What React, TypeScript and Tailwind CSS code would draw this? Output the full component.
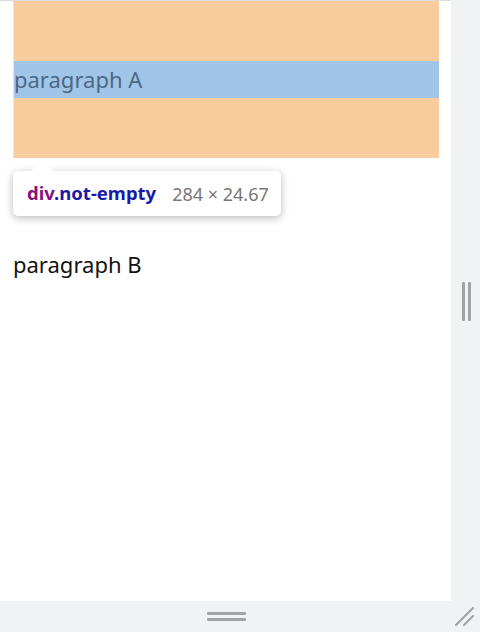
export default function App() {
  return (
    <div className="flex h-[632px] w-[480px] flex-col overflow-hidden bg-white font-['Noto_Sans',sans-serif]">
      <div className="flex h-[601px]">
        {/* page viewport */}
        <div className="relative w-[451px] border-t border-[#dcdcdc]">
          <div className="ml-[13px] flex h-[157px] w-[426px] flex-col justify-center border-l border-[#fbe2c6] bg-[#f9cc9d]">
            <div className="flex h-[37px] items-center bg-[#a0c5e8] text-[22px] leading-none text-[#4b6886]">
              <span className="-mt-[1px]">paragraph A</span>
            </div>
          </div>

          <p className="ml-[13px] mt-[88px] flex h-[37px] items-center text-[22px] leading-none text-[#111]">
            <span className="-mt-[1px]">paragraph B</span>
          </p>

          {/* inspect tooltip */}
          <div className="absolute left-[13px] top-[170px] flex h-[45px] w-[268px] items-center gap-[16px] rounded-[5px] bg-white pl-[14px] shadow-[0_2px_8px_rgba(0,0,0,0.28)]">
            <div className="absolute -top-[10px] left-[18px] h-0 w-0 border-x-[11px] border-b-[10px] border-x-transparent border-b-white" />
            <span className="text-[18.5px] font-bold leading-none">
              <span className="text-[#881280]">div</span>
              <span className="text-[#1a1aa6]">.not-empty</span>
            </span>
            <span className="text-[18px] leading-none text-[#777]">284 × 24.67</span>
          </div>
        </div>

        {/* vertical scrollbar / splitter */}
        <div className="flex flex-1 items-center justify-center bg-[#f1f2f4]">
          <div className="mt-[2px] flex h-[39px] gap-[3px] pl-[1px]">
            <div className="w-[3px] rounded-[1px] bg-[#a3a3a3]" />
            <div className="w-[3px] rounded-[1px] bg-[#a3a3a3]" />
          </div>
        </div>
      </div>

      {/* bottom splitter */}
      <div className="relative flex flex-1 items-center bg-[#f1f2f4]">
        <div className="flex w-[451px] justify-center">
          <div className="-mt-[1px] ml-[1px] flex w-[39px] flex-col gap-[3px]">
            <div className="h-[3px] rounded-[1px] bg-[#a3a3a3]" />
            <div className="h-[3px] rounded-[1px] bg-[#a3a3a3]" />
          </div>
        </div>
        <svg className="absolute right-[5px] top-[6px]" width="20" height="20" viewBox="0 0 20 20">
          <line x1="1" y1="18" x2="18" y2="1" stroke="#a3a3a3" strokeWidth="2.2" strokeLinecap="round" />
          <line x1="9" y1="18" x2="18" y2="9" stroke="#a3a3a3" strokeWidth="2.2" strokeLinecap="round" />
        </svg>
      </div>
    </div>
  );
}
